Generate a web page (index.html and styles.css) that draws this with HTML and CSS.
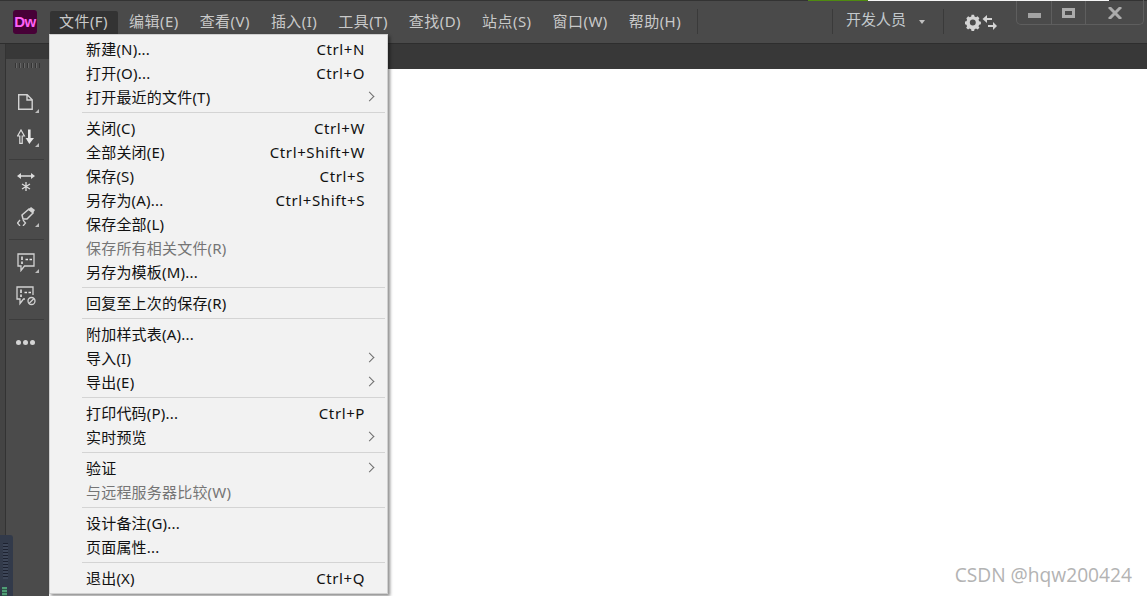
FILE: index.html
```html
<!DOCTYPE html>
<html lang="zh">
<head>
<meta charset="utf-8">
<title>Dreamweaver</title>
<link rel="stylesheet" href="styles.css">
</head>
<body>
<div class="app">
  <header class="titlebar">
    <div class="topsliver"><i class="green"></i><i class="white"></i></div>
    <div class="logo">Dw</div>
    <nav class="menubar">
      <span class="mi active">文件(F)</span>
      <span class="mi">编辑(E)</span>
      <span class="mi">查看(V)</span>
      <span class="mi">插入(I)</span>
      <span class="mi">工具(T)</span>
      <span class="mi">查找(D)</span>
      <span class="mi">站点(S)</span>
      <span class="mi">窗口(W)</span>
      <span class="mi">帮助(H)</span>
    </nav>
    <div class="vsep sep-a"></div>
    <div class="spacer"></div>
    <div class="vsep"></div>
    <div class="workspace">开发人员<span class="caret"></span></div>
    <div class="vsep"></div>
    <svg class="sync" width="32" height="18" viewBox="0 0 32 18">
      <path fill="#d4d4d4" fill-rule="evenodd" d="M6.500 1h3l.5 2 1.800.8 1.800-1.100 2.200 2.200-1.100 1.800.8 1.800 2 .5v3l-2 .5-.8 1.800 1.100 1.800-2.200 2.200-1.800-1.100-1.800.8-.5 2h-3l-.5-2-1.800-.8-1.800 1.100-2.200-2.200 1.100-1.800-.8-1.800-2-.5v-3l2-.5.8-1.800L.4 4.900l2.200-2.200 1.800 1.100 1.800-.8z M8 6.500a3.500 3.500 0 1 0 0 7 3.500 3.500 0 0 0 0-7z" transform="translate(1 0) scale(.85)"/>
      <path fill="none" stroke="#d4d4d4" stroke-width="2.200" d="M27 5h-6M23 12h6"/>
      <path fill="#d4d4d4" d="M22 1v8l-4.500-4zM28 8v8l4-4z"/>
    </svg>
    <div class="winctl">
      <span class="wbtn wmin"><i></i></span>
      <span class="wbtn wmax"><i></i></span>
      <span class="wbtn wclose">
        <svg width="14" height="12" viewBox="0 0 14 12"><path stroke="#ababab" stroke-width="3" d="M1 0l12 12M13 0L1 12"/></svg>
      </span>
    </div>
  </header>
  <div class="tabbar"></div>
  <div class="workarea">
    <div class="leftstrip"><div class="meter"><div class="meter-lines"></div><div class="meter-green"></div></div></div>
    <aside class="toolbar">
      <div class="grip"></div>
      <div class="tgroup first">
        <div class="tool more-tri">
          <svg width="15" height="16" viewBox="0 0 15 16"><path fill="none" stroke="#d2d2d2" stroke-width="1.400" d="M.7.700h8.500l5 5v9.600H.700zM9 .700V6h5.300"/></svg>
        </div>
        <div class="tool more-tri">
          <svg width="17" height="15" viewBox="0 0 17 15"><path fill="none" stroke="#dcdcdc" stroke-width="1.200" d="M2.800 14.400V7H.6L4 1l3.400 6H5.200v7.400z"/><path fill="#e6e6e6" d="M11 .5h2.600V9H17l-4.700 6L9 9.500l-.6-.5H11z"/></svg>
        </div>
      </div>
      <div class="tgroup">
        <div class="tool">
          <svg width="18" height="22" viewBox="0 -2 18 22"><path stroke="#dcdcdc" stroke-width="1.500" d="M3 3h12"/><path fill="#dcdcdc" d="M0 3l4-3v6zM18 3l-4-3v6z"/><path stroke="#dcdcdc" stroke-width="1.300" d="M9 9v9M5 11l8 5M13 11l-8 5"/></svg>
        </div>
        <div class="tool more-tri">
          <svg width="18" height="19" viewBox="0 0 18 19"><path fill="none" stroke="#d2d2d2" stroke-width="1.500" d="M5 8l7-6 4 4-6 6H6z"/><path fill="#d2d2d2" d="M11 3l3-3 4 3-2 3z"/><path fill="none" stroke="#d2d2d2" stroke-width="1.300" d="M3 13l-2.500 3L3 19M6 13l2.500 3L6 19"/></svg>
        </div>
      </div>
      <div class="tgroup">
        <div class="tool more-tri">
          <svg width="18" height="19" viewBox="0 0 18 19"><path fill="none" stroke="#d2d2d2" stroke-width="1.300" d="M1 1h16v12H7.500L4 17.500V13H1z"/><path stroke="#e4e4e4" stroke-width="1.600" d="M5 3.500V7M5 8.500v2.500M8.500 6.500H11M12.500 6.500H15"/></svg>
        </div>
        <div class="tool">
          <svg width="20" height="20" viewBox="0 0 20 20"><path fill="none" stroke="#d2d2d2" stroke-width="1.300" d="M9 13H7.500L4 17.500V13H1V1h16v8"/><path stroke="#e4e4e4" stroke-width="1.600" d="M5 3.500V7M5 8.500v2.500M8.500 6.500H11M12.500 6.500H15"/><circle cx="15.500" cy="15" r="3.500" fill="none" stroke="#d2d2d2" stroke-width="1.300"/><path stroke="#d2d2d2" stroke-width="1.300" d="M13 17.500l5-5"/></svg>
        </div>
      </div>
      <div class="tgroup dots"><i></i><i></i><i></i></div>
    </aside>
    <main class="canvas"></main>
  </div>

  <div class="menu">
    <div class="row"><span>新建(N)...</span><kbd>Ctrl+N</kbd></div>
    <div class="row"><span>打开(O)...</span><kbd>Ctrl+O</kbd></div>
    <div class="row sub"><span>打开最近的文件(T)</span></div>
    <div class="sep"></div>
    <div class="row"><span>关闭(C)</span><kbd>Ctrl+W</kbd></div>
    <div class="row"><span>全部关闭(E)</span><kbd>Ctrl+Shift+W</kbd></div>
    <div class="row"><span>保存(S)</span><kbd>Ctrl+S</kbd></div>
    <div class="row"><span>另存为(A)...</span><kbd>Ctrl+Shift+S</kbd></div>
    <div class="row"><span>保存全部(L)</span></div>
    <div class="row off"><span>保存所有相关文件(R)</span></div>
    <div class="row"><span>另存为模板(M)...</span></div>
    <div class="sep"></div>
    <div class="row"><span>回复至上次的保存(R)</span></div>
    <div class="sep"></div>
    <div class="row"><span>附加样式表(A)...</span></div>
    <div class="row sub"><span>导入(I)</span></div>
    <div class="row sub"><span>导出(E)</span></div>
    <div class="sep"></div>
    <div class="row"><span>打印代码(P)...</span><kbd>Ctrl+P</kbd></div>
    <div class="row sub"><span>实时预览</span></div>
    <div class="sep"></div>
    <div class="row sub"><span>验证</span></div>
    <div class="row off"><span>与远程服务器比较(W)</span></div>
    <div class="sep"></div>
    <div class="row"><span>设计备注(G)...</span></div>
    <div class="row"><span>页面属性...</span></div>
    <div class="sep"></div>
    <div class="row"><span>退出(X)</span><kbd>Ctrl+Q</kbd></div>
  </div>
  <div class="watermark">CSDN @hqw200424</div>
</div>
</body>
</html>
```
FILE: styles.css
```css
* { box-sizing: border-box; }
html, body { margin: 0; height: 100%; overflow: hidden; }
body { font-family: "Noto Sans", "Noto Sans CJK SC", sans-serif; background: #fff; }
.app { position: relative; width: 1147px; height: 596px; display: flex; flex-direction: column; overflow: hidden; }

.titlebar {
  height: 44px; flex: none; display: flex; align-items: flex-start;
  background: #4a4a4a; border-top: 1px solid #333; border-bottom: 1px solid #2e2e2e;
  padding: 0 3px 0 13px; position: relative;
}
.topsliver { position: absolute; left: 808px; top: -1px; display: flex; height: 1px; }
.topsliver .green { width: 60px; background: #4f8a10; }
.topsliver .white { width: 241px; background: #f5f5f5; }
.logo {
  width: 24px; height: 24px; margin-top: 9px; border-radius: 3px; background: #470137;
  color: #ff61f6; font: bold 15px/24px "Liberation Sans", sans-serif; text-align: center; letter-spacing: -0.5px;
}
.menubar { display: flex; margin-left: 13px; margin-top: 10px; }
.mi {
  height: 23px; padding: 0 10px 0 9px; margin-right: 2px; font-size: 15px; line-height: 21px; letter-spacing: .45px; color: #c9c9c9; white-space: nowrap;
}
.mi.active { background: #333; border-radius: 2px 2px 0 0; }
.vsep { width: 1px; height: 25px; margin-top: 8px; background: #3a3a3a; flex: none; }
.sep-a { margin-left: 4px; }
.spacer { flex: 1; }
.workspace { width: 110px; flex: none; margin: 7px 0 0 0; padding-left: 13px; font-size: 15px; line-height: 22px; color: #c2c8cc; display: flex; align-items: center; }
.caret { margin-left: 13px; margin-top: 6px; border: 4px solid transparent; border-top-color: #c0c0c0; border-bottom: 0; border-left-width: 3px; border-right-width: 3px; }
.sync { margin: 13px 0 0 21px; flex: none; }
.winctl { display: flex; flex: none; margin: -1px 0 0 19px; height: 25px; width: 128px; border: 1px solid #5e5e5e; border-top: 0; border-radius: 0 0 5px 5px; }
.wbtn { display: flex; justify-content: center; height: 100%; border-right: 1px solid #5e5e5e; }
.wmin { width: 35px; }
.wmin i { width: 13px; height: 5px; margin-top: 13px; background: #a3a3a3; }
.wmax { width: 34px; }
.wmax i { width: 13px; height: 10px; margin-top: 8px; border: 3px solid #ababab; }
.wclose { flex: 1; border-right: 0; padding-top: 7px; }

.tabbar { height: 25px; flex: none; background: #383838; }
.workarea { flex: 1; display: flex; min-height: 0; }
.leftstrip { width: 6px; flex: none; background: #444; border-right: 1px solid #333; position: relative; margin-top: -25px; z-index: 1; }
.meter { position: absolute; left: 0; top: 491px; width: 13px; height: 61px; background: #323a4a; border-radius: 0 3px 0 0; overflow: hidden; }
.meter-lines { position: absolute; left: 3px; top: 8px; width: 5px; height: 36px; background: repeating-linear-gradient(#1d2230 0 1px, #3d4658 1px 3px); }
.meter-green { position: absolute; left: 2px; top: 52px; width: 5px; height: 9px; background: repeating-linear-gradient(#4f9d76 0 2px, #2d5a48 2px 3px); }
.toolbar {
  width: 43px; flex: none; background: #4b4b4b; display: flex; flex-direction: column; margin-top: -10px; position: relative;
}
.grip { height: 5px; margin: 4px 9px 0 9px; background: repeating-linear-gradient(90deg, #353535 0 1px, #666 1px 2px, transparent 2px 4px); flex: none; }
.tgroup { border-bottom: 1px solid #3c3c3c; margin: 0 5px 0 3px; padding: 5px 0 6px; display: flex; flex-direction: column; }
.tgroup.first { padding-top: 17px; }
.tool { height: 34px; padding-right: 2px; display: flex; align-items: center; justify-content: center; position: relative; }
.more-tri::after {
  content: ""; position: absolute; right: 5px; bottom: 6px; border-style: solid; border-width: 0 0 4px 4px;
  border-color: transparent transparent #bdbdbd transparent;
}
.dots { flex-direction: row; justify-content: center; gap: 2px; border: 0; padding: 20px 3px 0 0; }
.dots i { width: 5px; height: 5px; border-radius: 50%; background: #d4d4d4; }
.canvas { flex: 1; background: #fff; }

.menu {
  position: absolute; left: 49px; top: 34px; width: 339px; height: 560px; padding: 2px 2px 0 32px;
  background: #f2f2f2; border: 1px solid #d0d0d0; box-shadow: 2px 2px 3px rgba(0,0,0,.45); z-index: 3;
  font-size: 15px; color: #111; letter-spacing: .2px;
}
.row { height: 24px; display: flex; justify-content: space-between; align-items: center; padding: 0 20px 0 4px; line-height: 24px; white-space: nowrap; position: relative; }
.row kbd { font: inherit; letter-spacing: .6px; }
.row.off { color: #757575; }
.sub::after {
  content: ""; position: absolute; right: 12px; top: 8px; width: 6px; height: 6px;
  border-top: 1px solid #6e6e6e; border-right: 1px solid #6e6e6e; transform: rotate(45deg);
}
.sep { height: 7px; display: flex; align-items: center; }
.sep::before { content: ""; flex: 1; height: 1px; background: #d4d4d4; }

.watermark {
  position: absolute; right: 15px; bottom: 9px; font-family: "Open Sans", sans-serif; font-size: 19.2px; color: #b3b3b3; line-height: 24px;
}
```
